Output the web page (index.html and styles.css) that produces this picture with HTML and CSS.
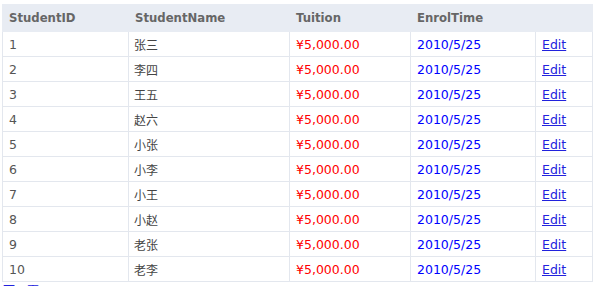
FILE: index.html
```html
<!DOCTYPE html>
<html lang="zh">
<head>
<meta charset="utf-8">
<title>Students</title>
<link rel="stylesheet" href="styles.css">
</head>
<body>
<div class="wrap">
  <table class="grid">
    <colgroup>
      <col class="c-id">
      <col class="c-name">
      <col class="c-fee">
      <col class="c-time">
      <col class="c-edit">
    </colgroup>
    <thead>
      <tr><th>StudentID</th><th>StudentName</th><th>Tuition</th><th>EnrolTime</th><th></th></tr>
    </thead>
    <tbody>
      <tr><td>1</td><td class="cn">张三</td><td class="fee">¥5,000.00</td><td class="time">2010/5/25</td><td><a href="#">Edit</a></td></tr>
      <tr><td>2</td><td class="cn">李四</td><td class="fee">¥5,000.00</td><td class="time">2010/5/25</td><td><a href="#">Edit</a></td></tr>
      <tr><td>3</td><td class="cn">王五</td><td class="fee">¥5,000.00</td><td class="time">2010/5/25</td><td><a href="#">Edit</a></td></tr>
      <tr><td>4</td><td class="cn">赵六</td><td class="fee">¥5,000.00</td><td class="time">2010/5/25</td><td><a href="#">Edit</a></td></tr>
      <tr><td>5</td><td class="cn">小张</td><td class="fee">¥5,000.00</td><td class="time">2010/5/25</td><td><a href="#">Edit</a></td></tr>
      <tr><td>6</td><td class="cn">小李</td><td class="fee">¥5,000.00</td><td class="time">2010/5/25</td><td><a href="#">Edit</a></td></tr>
      <tr><td>7</td><td class="cn">小王</td><td class="fee">¥5,000.00</td><td class="time">2010/5/25</td><td><a href="#">Edit</a></td></tr>
      <tr><td>8</td><td class="cn">小赵</td><td class="fee">¥5,000.00</td><td class="time">2010/5/25</td><td><a href="#">Edit</a></td></tr>
      <tr><td>9</td><td class="cn">老张</td><td class="fee">¥5,000.00</td><td class="time">2010/5/25</td><td><a href="#">Edit</a></td></tr>
      <tr><td>10</td><td class="cn">老李</td><td class="fee">¥5,000.00</td><td class="time">2010/5/25</td><td><a href="#">Edit</a></td></tr>
    </tbody>
  </table>
  <div class="pager"><a href="#">下一页</a></div>
</div>
</body>
</html>
```
FILE: styles.css
```css
html, body {
  margin: 0;
  padding: 0;
  background: #fff;
}
body {
  font-family: "DejaVu Sans", Verdana, "Noto Sans CJK SC", sans-serif;
  font-size: 12px;
  color: #555;
}
.wrap {
  padding: 4px 0 0 2px;
}
.grid {
  width: 590px;
  border-collapse: collapse;
  table-layout: fixed;
}
.c-id { width: 126px; }
.c-name { width: 161px; }
.c-fee { width: 121px; }
.c-time { width: 125px; }
.c-edit { width: 57px; }

.grid th {
  background: #e8ecf3;
  border: 1px solid #e8ecf3;
  color: #666;
  font-weight: bold;
  font-size: 11.7px;
  text-align: left;
  height: 26px;
  padding: 0 0 0 6px;
  vertical-align: middle;
}
.grid td {
  border: 1px solid #e3e7ee;
  height: 24px;
  padding: 0 0 0 6px;
  vertical-align: middle;
  font-size: 12.5px;
  white-space: nowrap;
}
.grid td.cn {
  font-family: "Noto Sans CJK SC", sans-serif;
  font-size: 12px;
  color: #444;
  padding-left: 5px;
}
.grid td.fee { color: #ff0000; }
.grid td.time { color: #0000ff; }
.grid a { color: #2222dd; text-decoration: underline; }

.pager {
  padding: 0 0 0 1px;
  font-family: "Noto Sans CJK SC", sans-serif;
  font-size: 12px;
  line-height: 16px;
}
.pager a { color: #2222dd; }
```
